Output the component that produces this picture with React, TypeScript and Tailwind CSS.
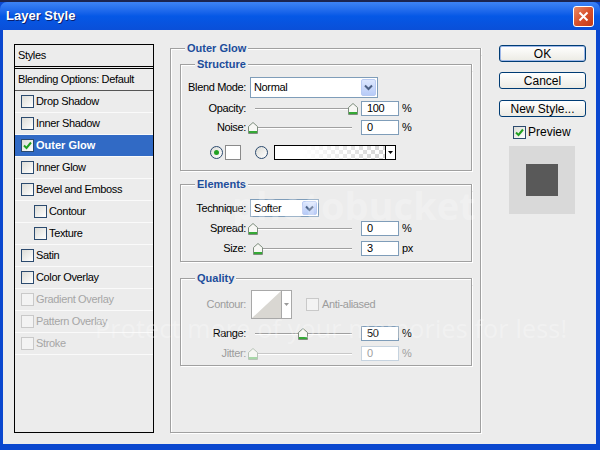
import React from "react";

type StyleRow = {
  label: string;
  checked?: boolean;
  selected?: boolean;
  indent?: boolean;
  disabled?: boolean;
};

const styleRows: StyleRow[] = [
  { label: "Drop Shadow" },
  { label: "Inner Shadow" },
  { label: "Outer Glow", checked: true, selected: true },
  { label: "Inner Glow" },
  { label: "Bevel and Emboss" },
  { label: "Contour", indent: true },
  { label: "Texture", indent: true },
  { label: "Satin" },
  { label: "Color Overlay" },
  { label: "Gradient Overlay", disabled: true },
  { label: "Pattern Overlay", disabled: true },
  { label: "Stroke", disabled: true },
];

const Tick = () => (
  <svg width="9" height="9" viewBox="0 0 9 9">
    <path d="M1 4.5 L3.5 7 L8 1.5" fill="none" stroke="#21a121" strokeWidth="2" />
  </svg>
);

function CheckBox({ checked = false, disabled = false }: { checked?: boolean; disabled?: boolean }) {
  return (
    <div
      className={`w-[13px] h-[13px] shrink-0 border flex items-center justify-center ${
        disabled
          ? "border-[#c9c9c9] bg-[#f3f3f3]"
          : "border-[#2b4a6e] bg-linear-to-br from-[#dcdcd7] to-white"
      }`}
    >
      {checked && <Tick />}
    </div>
  );
}

function Radio({ on = false }: { on?: boolean }) {
  return (
    <div className="w-[13px] h-[13px] rounded-full border border-[#2b4a6e] bg-linear-to-br from-[#dcdcd7] to-white flex items-center justify-center">
      {on && <div className="w-[5px] h-[5px] rounded-full bg-[#21a121]" />}
    </div>
  );
}

const Thumb = ({ dim }: { dim?: boolean }) => (
  <svg width="10" height="12" viewBox="0 0 10 12">
    <path
      d="M0.5 4.5 L5 0.5 L9.5 4.5 V11.5 H0.5 Z"
      fill="#f7f7f4"
      stroke={dim ? "#b8c4b8" : "#7d8d7d"}
    />
    <rect x="1" y="9" width="8" height="2" fill={dim ? "#a8d8a8" : "#35a935"} />
  </svg>
);

function Slider({ pos, dim }: { pos: number; dim?: boolean }) {
  return (
    <div className="relative w-[107px] h-[16px]">
      <div
        className={`absolute left-[5px] top-[8px] w-[97px] h-[2px] border-t border-b border-b-white ${
          dim ? "border-t-[#c8c8c8]" : "border-t-[#a0a0a0]"
        }`}
      />
      <div className="absolute top-[3px]" style={{ left: pos - 2 }}>
        <Thumb dim={dim} />
      </div>
    </div>
  );
}

function Field({ value, unit, dim }: { value: string; unit: string; dim?: boolean }) {
  return (
    <div className="flex items-center">
      <div
        className={`w-[38px] h-[15px] border bg-white pl-[5px] flex items-center ${
          dim ? "border-[#c6d3df] text-[#a0a0a0]" : "border-[#7f9db9]"
        }`}
      >
        {value}
      </div>
      <span className={`ml-[3px] ${dim ? "text-[#a0a0a0]" : ""}`}>{unit}</span>
    </div>
  );
}

function SliderRow({
  label,
  pos,
  value,
  unit,
  dim,
  mt,
}: {
  label: string;
  pos: number;
  value: string;
  unit: string;
  dim?: boolean;
  mt: string;
}) {
  return (
    <div className={`flex h-[16px] items-center ${mt}`}>
      <span className={`w-[65px] text-right ${dim ? "text-[#9c9c9c]" : ""}`}>{label}</span>
      <div className="ml-[4px]">
        <Slider pos={pos} dim={dim} />
      </div>
      <div className="ml-[4px]">
        <Field value={value} unit={unit} dim={dim} />
      </div>
    </div>
  );
}

const Chevron = () => (
  <svg width="9" height="7" viewBox="0 0 9 7">
    <path d="M1 1.5 L4.5 5 L8 1.5" fill="none" stroke="#4d6185" strokeWidth="2" />
  </svg>
);

function Combo({ value, w, h }: { value: string; w: string; h: string }) {
  return (
    <div className={`flex border border-[#7f9db9] bg-white ${w} ${h}`}>
      <span className="flex-1 flex items-center pl-[3px]">{value}</span>
      <div className="w-[15px] m-[1px] rounded-[2px] border border-[#b9cbf3] bg-linear-to-b from-[#dde7fe] to-[#b7cbf7] flex items-center justify-center">
        <Chevron />
      </div>
    </div>
  );
}

function Group({
  title,
  children,
  className = "",
  bodyClass = "",
}: {
  title: string;
  children?: React.ReactNode;
  className?: string;
  bodyClass?: string;
}) {
  return (
    <div className={`flex flex-col ${className}`}>
      <div className="flex h-[14px]">
        <div className="w-[15px] mt-[7px] border-t border-l border-[#a0a0a0] shadow-[inset_1px_1px_0_#fff]" />
        <span className="px-[2px] leading-[14px] font-bold text-[#1c4d9b] tracking-normal">{title}</span>
        <div className="flex-1 mt-[7px] border-t border-r border-[#a0a0a0] shadow-[inset_0_1px_0_#fff,1px_0_0_#fff]" />
      </div>
      <div
        className={`flex-1 flex flex-col border-x border-b border-[#a0a0a0] shadow-[inset_1px_0_0_#fff,1px_1px_0_#fff] ${bodyClass}`}
      >
        {children}
      </div>
    </div>
  );
}

function Button({ label, primary }: { label: string; primary?: boolean }) {
  return (
    <div
      className={`w-[87px] h-[17px] rounded-[3px] border border-[#003c74] bg-linear-to-b from-white to-[#ecebe4] flex items-center justify-center text-[12px] tracking-normal ${
        primary ? "shadow-[inset_0_0_0_1px_#9db7e8]" : ""
      }`}
    >
      {label}
    </div>
  );
}

export default function App() {
  return (
    <div className="relative w-[600px] h-[450px] overflow-hidden bg-[#0a47cf] flex flex-col font-['Liberation_Sans',Arial,sans-serif] text-[11px] tracking-[-0.35px] text-black">
      <div className="h-[2px] bg-[#1b2450]" />
      {/* title bar */}
      <div className="h-[28px] rounded-t-[7px] bg-linear-to-b from-[#3d83f5] via-[#0558e6] to-[#0a4fd8] flex items-center justify-between pl-[6px] pr-[6px]">
        <span className="text-white font-bold text-[13px] tracking-normal [text-shadow:1px_1px_0_#0a1f6e]">
          Layer Style
        </span>
        <div className="w-[21px] h-[21px] rounded-[3px] border border-white bg-linear-to-br from-[#e98a64] via-[#d9512c] to-[#c23a17] flex items-center justify-center">
          <svg width="11" height="11" viewBox="0 0 11 11">
            <path d="M1.5 1.5 L9.5 9.5 M9.5 1.5 L1.5 9.5" stroke="#fff" strokeWidth="2" />
          </svg>
        </div>
      </div>

      {/* dialog body */}
      <div className="flex-1 ml-[3px] mr-[4px] mb-[6px] bg-[#ececec] flex pl-[11px] pb-[11px]">
        {/* styles list */}
        <div className="mt-[14px] w-[140px] border border-black flex flex-col">
          <div className="h-[21px] flex items-center pl-[3px] border-b-[3px] border-double border-black box-content">
            Styles
          </div>
          <div className="h-[22px] flex items-center pl-[3px] border-b border-[#555]">
            Blending Options: Default
          </div>
          {styleRows.map((r) => (
            <div
              key={r.label}
              className={`h-[22px] flex items-center gap-[2px] border-b border-b-[#fafafa] ${
                r.indent ? "pl-[19px]" : "pl-[6px]"
              } ${r.selected ? "bg-[#316ac5] text-white font-bold tracking-normal" : ""} ${
                r.disabled ? "text-[#a6a6a6]" : ""
              }`}
            >
              <div className={r.selected ? "bg-white" : ""}>
                <CheckBox checked={r.checked} disabled={r.disabled} />
              </div>
              <span>{r.label}</span>
            </div>
          ))}
        </div>

        {/* settings */}
        <Group title="Outer Glow" className="ml-[16px] mt-[11px] w-[311px]" bodyClass="pl-[9px] pr-[8px] pt-[2px]">
          <Group title="Structure" className="w-[292px]" bodyClass="pb-[10px]">
            <div className="flex items-center h-[21px] mt-[6px]">
              <span className="w-[65px] text-right">Blend Mode:</span>
              <div className="ml-[4px]">
                <Combo value="Normal" w="w-[128px]" h="h-[21px]" />
              </div>
            </div>
            <SliderRow label="Opacity:" pos={100} value="100" unit="%" mt="mt-[2px]" />
            <SliderRow label="Noise:" pos={0} value="0" unit="%" mt="mt-[3px]" />
            <div className="flex items-center h-[16px] mt-[9px] pl-[29px]">
              <Radio on />
              <div className="ml-[2px] w-[16px] h-[15px] border border-[#8a8a8a] bg-white" />
              <div className="ml-[14px]">
                <Radio />
              </div>
              <div className="ml-[6px] w-[122px] h-[15px] border border-black flex">
                <div className="flex-1 bg-[linear-gradient(to_right,#fff_25%,rgba(255,255,255,0)),repeating-conic-gradient(#d4d4d4_0%_25%,#fff_0%_50%)] bg-[length:100%_100%,8px_8px]" />
                <div className="w-[10px] border-l border-black bg-white flex items-center justify-center">
                  <svg width="5" height="3" viewBox="0 0 5 3">
                    <path d="M0 0 H5 L2.5 3 Z" fill="#000" />
                  </svg>
                </div>
              </div>
            </div>
          </Group>

          <Group title="Elements" className="w-[292px] mt-[6px]" bodyClass="pb-[5px]">
            <div className="flex items-center h-[18px] mt-[8px]">
              <span className="w-[65px] text-right">Technique:</span>
              <div className="ml-[4px]">
                <Combo value="Softer" w="w-[69px]" h="h-[18px]" />
              </div>
            </div>
            <SliderRow label="Spread:" pos={0} value="0" unit="%" mt="mt-[3px]" />
            <SliderRow label="Size:" pos={5} value="3" unit="px" mt="mt-[4px]" />
          </Group>

          <Group title="Quality" className="w-[292px] mt-[9px]" bodyClass="pb-[4px]">
            <div className="flex items-center h-[29px] mt-[5px]">
              <span className="w-[65px] text-right text-[#9c9c9c]">Contour:</span>
              <div className="ml-[5px] w-[41px] h-[29px] border border-[#a8a8a8] bg-white flex">
                <svg width="29" height="27" viewBox="0 0 29 27">
                  <path d="M0 27 L29 0 V27 Z" fill="#d9d7d2" />
                </svg>
                <div className="flex-1 border-l border-[#a8a8a8] flex items-center justify-center">
                  <svg width="5" height="3" viewBox="0 0 5 3">
                    <path d="M0 0 H5 L2.5 3 Z" fill="#9a9a9a" />
                  </svg>
                </div>
              </div>
              <div className="ml-[14px]">
                <CheckBox disabled />
              </div>
              <span className="ml-[3px] text-[#9c9c9c]">Anti-aliased</span>
            </div>
            <SliderRow label="Range:" pos={50} value="50" unit="%" mt="mt-[6px]" />
            <SliderRow label="Jitter:" pos={0} value="0" unit="%" dim mt="mt-[4px]" />
          </Group>
        </Group>

        {/* buttons */}
        <div className="ml-[18px] mt-[15px] w-[87px] flex flex-col">
          <Button label="OK" primary />
          <div className="mt-[10px]">
            <Button label="Cancel" />
          </div>
          <div className="mt-[11px]">
            <Button label="New Style..." />
          </div>
          <div className="mt-[9px] h-[12px] flex items-center pl-[14px] gap-[2px] text-[12px] tracking-normal">
            <CheckBox checked />
            <span>Preview</span>
          </div>
          <div className="mt-[8px] ml-[10px] w-[66px] h-[68px] bg-[#d9d9d9] flex items-center justify-center">
            <div className="w-[32px] h-[32px] bg-[#595959]" />
          </div>
        </div>
      </div>

      {/* photobucket watermark */}
      <div className="pointer-events-none absolute inset-0 flex flex-col items-start font-['Open_Sans',sans-serif] tracking-normal whitespace-nowrap">
        <div className="mt-[185px] ml-[232px] text-[38px] leading-[40px] font-bold text-white/25">photobucket</div>
        <div className="mt-[88px] ml-[95px] text-[25px] leading-[30px] tracking-[0.2px] text-white/30">
          Protect more of your memories for less!
        </div>
      </div>
    </div>
  );
}
